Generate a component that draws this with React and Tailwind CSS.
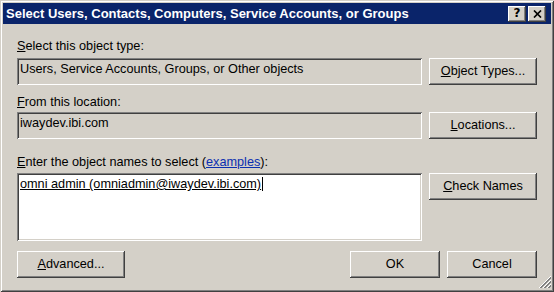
const raised =
  "shadow-[inset_-1px_-1px_#404040,inset_1px_1px_#ffffff,inset_-2px_-2px_#808080,inset_2px_2px_#d4d0c8]";
const sunken =
  "shadow-[inset_1px_1px_#808080,inset_-1px_-1px_#ffffff,inset_2px_2px_#404040,inset_-2px_-2px_#d4d0c8]";

function Btn({ className = "", children }) {
  return (
    <div
      className={
        "h-[27px] flex items-center justify-center bg-[#d4d0c8] text-[12.7px] leading-[15px] " +
        raised +
        " " +
        className
      }
    >
      {children}
    </div>
  );
}

function CapBtn({ children }) {
  return (
    <div
      className={
        "w-[18px] h-[16px] bg-[#d4d0c8] flex items-center justify-center " + raised
      }
    >
      {children}
    </div>
  );
}

export default function App() {
  return (
    <div className="w-[554px] h-[292px] bg-[#d4d0c8] relative font-['Liberation_Sans',Arial,sans-serif] text-black shadow-[inset_1px_1px_#d4d0c8,inset_-1px_-1px_#404040,inset_2px_2px_#ffffff,inset_-2px_-2px_#808080] p-[3px] flex flex-col overflow-hidden">
      {/* Title bar */}
      <div className="h-[21px] bg-[#0a246a] flex items-center pl-[3px] pr-[5px]">
        <span className="text-white font-bold text-[13px] leading-[16px] whitespace-nowrap">
          Select Users, Contacts, Computers, Service Accounts, or Groups
        </span>
        <div className="ml-auto flex gap-[2px]">
          <CapBtn>
            <span className="font-bold text-[12px] leading-[12px] font-['DejaVu_Sans',sans-serif] -mt-px">
              ?
            </span>
          </CapBtn>
          <CapBtn>
            <svg width="9" height="8" viewBox="0 0 9 8">
              <path d="M1 0.5 L8 7.5 M8 0.5 L1 7.5" stroke="#000" strokeWidth="1.7" />
            </svg>
          </CapBtn>
        </div>
      </div>

      {/* Body */}
      <div className="flex-1 flex flex-col px-[14px] pt-[15px] text-[12.7px] leading-[15px]">
        <div>
          <u>S</u>elect this object type:
        </div>
        <div className="mt-[4px] flex gap-[7px]">
          <div className={"w-[405px] h-[27px] bg-[#d4d0c8] px-[3px] pt-[4px] whitespace-nowrap " + sunken}>
            Users, Service Accounts, Groups, or Other objects
          </div>
          <Btn className="w-[108px]">
            <span>
              <u>O</u>bject Types...
            </span>
          </Btn>
        </div>

        <div className="mt-[10px]">
          <u>F</u>rom this location:
        </div>
        <div className="mt-[2px] flex gap-[7px]">
          <div className={"w-[405px] h-[27px] bg-[#d4d0c8] px-[3px] pt-[4px] whitespace-nowrap " + sunken}>
            iwaydev.ibi.com
          </div>
          <Btn className="w-[108px]">
            <span>
              <u>L</u>ocations...
            </span>
          </Btn>
        </div>

        <div className="mt-[16px]">
          <u>E</u>nter the object names to select (
          <span className="text-[#0b2fb0] underline">examples</span>):
        </div>
        <div className="mt-[3px] flex gap-[7px] items-start">
          <div className={"w-[405px] h-[68px] bg-white px-[3px] pt-[4px] whitespace-nowrap " + sunken}>
            <span className="underline">omni admin (omniadmin@iwaydev.ibi.com)</span>
            <span className="inline-block w-px h-[14px] bg-black align-[-3px] ml-px" />
          </div>
          <Btn className="w-[108px]">
            <span>
              <u>C</u>heck Names
            </span>
          </Btn>
        </div>

        <div className="mt-[10px] flex">
          <Btn className="w-[108px]">
            <span>
              <u>A</u>dvanced...
            </span>
          </Btn>
          <Btn className="w-[90px] ml-auto">OK</Btn>
          <Btn className="w-[90px] ml-[7px]">Cancel</Btn>
        </div>
      </div>

      {/* Resize grip */}
      <svg
        className="absolute right-[3px] bottom-[3px]"
        width="13"
        height="13"
        viewBox="0 0 13 13"
      >
        <g strokeWidth="1" shapeRendering="crispEdges">
          <path d="M12.5 0.5 L0.5 12.5" stroke="#ffffff" />
          <path d="M12.5 1.5 L1.5 12.5 M12.5 2.5 L2.5 12.5" stroke="#808080" />
          <path d="M12.5 4.5 L4.5 12.5" stroke="#ffffff" />
          <path d="M12.5 5.5 L5.5 12.5 M12.5 6.5 L6.5 12.5" stroke="#808080" />
          <path d="M12.5 8.5 L8.5 12.5" stroke="#ffffff" />
          <path d="M12.5 9.5 L9.5 12.5 M12.5 10.5 L10.5 12.5" stroke="#808080" />
        </g>
      </svg>
    </div>
  );
}
